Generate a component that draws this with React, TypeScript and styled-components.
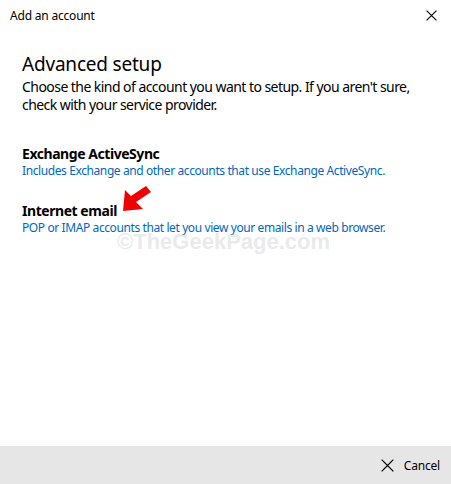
import React from "react";
import styled, { createGlobalStyle } from "styled-components";

const GlobalStyle = createGlobalStyle`
  html, body {
    margin: 0;
    padding: 0;
    background: #ffffff;
  }
  body {
    font-family: "Noto Sans", "Open Sans", sans-serif;
    color: #000;
  }
`;

const Window = styled.div`
  width: 451px;
  height: 484px;
  display: flex;
  flex-direction: column;
  background: #fff;
  overflow: hidden;
`;

const TitleBar = styled.div`
  height: 30px;
  display: flex;
  align-items: center;
  justify-content: space-between;
  padding: 0 14px 0 10px;
`;

const WindowTitle = styled.span`
  font-size: 12px;
  color: #000;
  letter-spacing: -0.2px;
`;

const Content = styled.div`
  flex: 1;
  padding: 20px 22px 0 22px;
  position: relative;
`;

const Heading = styled.h1`
  margin: 0;
  font-size: 19px;
  font-weight: 400;
  line-height: 28px;
  letter-spacing: -0.2px;
`;

const Intro = styled.p`
  margin: 0;
  font-size: 14px;
  line-height: 18px;
  letter-spacing: -0.55px;
`;

const Options = styled.div`
  display: flex;
  flex-direction: column;
  gap: 22px;
  margin-top: 30px;
`;

const Option = styled.div`
  display: flex;
  flex-direction: column;
`;

const OptionTitle = styled.span`
  font-size: 14px;
  font-weight: 700;
  line-height: 19px;
  letter-spacing: -0.45px;
`;

const OptionText = styled.span`
  font-size: 12px;
  line-height: 16px;
  color: #0067c0;
  letter-spacing: -0.4px;
`;

const TitleRow = styled.div`
  position: relative;
  display: inline-flex;
`;

const Arrow = styled.svg`
  position: absolute;
  left: 100px;
  top: -16px;
`;

const Watermark = styled.div`
  position: absolute;
  left: 117px;
  top: 199px;
  font-family: "Liberation Sans", Arial, sans-serif;
  font-size: 22px;
  font-weight: 700;
  color: rgba(200, 200, 200, 0.4);
  pointer-events: none;
`;

const Footer = styled.div`
  height: 38px;
  background: #e6e6e6;
  display: flex;
  align-items: center;
  justify-content: flex-end;
  padding-right: 11px;
`;

const CancelButton = styled.button`
  display: flex;
  align-items: center;
  gap: 10px;
  border: none;
  background: transparent;
  font-family: "Noto Sans", "Open Sans", sans-serif;
  font-size: 12px;
  letter-spacing: -0.2px;
  color: #000;
  padding: 0;
`;

function CloseIcon({ size }: { size: number }) {
  return (
    <svg width={size} height={size} viewBox="0 0 10 10">
      <path d="M0.5 0.5 L9.5 9.5 M9.5 0.5 L0.5 9.5" stroke="#000" strokeWidth="1" fill="none" />
    </svg>
  );
}

export default function App() {
  return (
    <>
      <GlobalStyle />
      <Window>
        <TitleBar>
          <WindowTitle>Add an account</WindowTitle>
          <CloseIcon size={11} />
        </TitleBar>
        <Content>
          <Heading>Advanced setup</Heading>
          <Intro>
            Choose the kind of account you want to setup. If you aren't sure,
            check with your service provider.
          </Intro>
          <Options>
            <Option>
              <OptionTitle>Exchange ActiveSync</OptionTitle>
              <OptionText>
                Includes Exchange and other accounts that use Exchange ActiveSync.
              </OptionText>
            </Option>
            <Option>
              <TitleRow>
                <OptionTitle>Internet email</OptionTitle>
                <Arrow width="30" height="28" viewBox="0 0 30 28">
                  <path
                    d="M1 26 L3 5 L9 11 L24 1 L29 7 L14 17 L21 24 Z"
                    fill="#f00000"
                  />
                </Arrow>
              </TitleRow>
              <OptionText>
                POP or IMAP accounts that let you view your emails in a web browser.
              </OptionText>
            </Option>
          </Options>
          <Watermark>©TheGeekPage.com</Watermark>
        </Content>
        <Footer>
          <CancelButton>
            <CloseIcon size={13} />
            Cancel
          </CancelButton>
        </Footer>
      </Window>
    </>
  );
}
